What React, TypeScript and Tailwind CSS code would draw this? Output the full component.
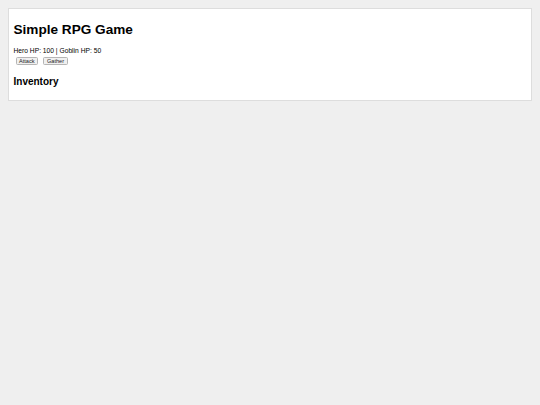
export default function App() {
  return (
    <div className="min-h-[405px] w-full bg-[#efefef] pt-[8px] px-[8px]" style={{ fontFamily: '"Liberation Sans", Arial, sans-serif' }}>
      <div className="h-[93px] w-[524px] border border-[#dddddd] bg-white pl-[4.5px] pt-[13px]">
        <h1 className="m-0 text-[13.6px] font-bold leading-[16px] text-black">Simple RPG Game</h1>
        <p className="mt-[9px] text-[6.7px] leading-[8px] text-black">Hero HP: 100 | Goblin HP: 50</p>
        <div className="mt-[2px] flex gap-[5.4px] pl-[2px]">
          <button className="h-[8px] rounded-[1.5px] border border-[#b5b5b5] bg-[#f0f0f0] px-[2.5px] text-[5.6px] leading-[6px] text-[#222]">Attack</button>
          <button className="h-[8px] rounded-[1.5px] border border-[#b5b5b5] bg-[#f0f0f0] px-[2.5px] text-[5.6px] leading-[6px] text-[#222]">Gather</button>
        </div>
        <h2 className="mt-[11px] text-[10px] font-bold leading-[12px] text-black">Inventory</h2>
      </div>
    </div>
  );
}
